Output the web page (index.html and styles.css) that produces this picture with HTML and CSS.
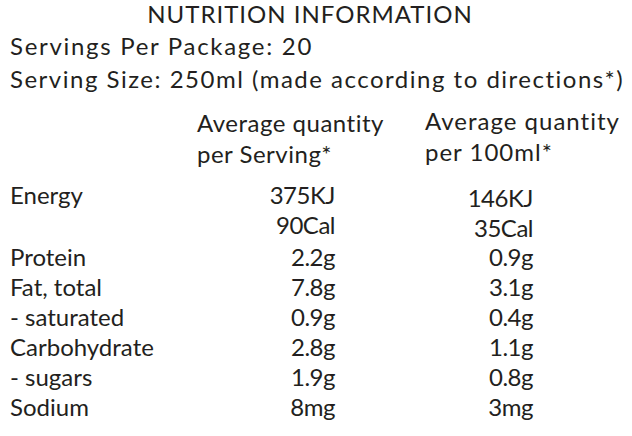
FILE: index.html
```html
<!DOCTYPE html>
<html lang="en">
<head>
<meta charset="utf-8">
<title>Nutrition Information</title>
<link rel="stylesheet" href="styles.css">
</head>
<body>
<main class="panel">
  <h1 class="title">NUTRITION INFORMATION</h1>
  <p class="info info-first">Servings Per Package: 20</p>
  <p class="info info-size">Serving Size: 250ml (made according to directions*)</p>

  <div class="heads">
    <div class="head head-1">Average quantity<br>per Serving*</div>
    <div class="head head-2">Average quantity<br>per 100ml*</div>
  </div>

  <div class="rows">
    <div class="row row-energy">
      <span class="label">Energy</span>
      <span class="val val-1">375KJ<br>90Cal</span>
      <span class="val val-2 shift">146KJ<br>35Cal</span>
    </div>
    <div class="row">
      <span class="label">Protein</span>
      <span class="val val-1">2.2g</span>
      <span class="val val-2">0.9g</span>
    </div>
    <div class="row">
      <span class="label">Fat, total</span>
      <span class="val val-1">7.8g</span>
      <span class="val val-2">3.1g</span>
    </div>
    <div class="row">
      <span class="label">- saturated</span>
      <span class="val val-1">0.9g</span>
      <span class="val val-2">0.4g</span>
    </div>
    <div class="row">
      <span class="label">Carbohydrate</span>
      <span class="val val-1">2.8g</span>
      <span class="val val-2">1.1g</span>
    </div>
    <div class="row">
      <span class="label">- sugars</span>
      <span class="val val-1">1.9g</span>
      <span class="val val-2">0.8g</span>
    </div>
    <div class="row">
      <span class="label">Sodium</span>
      <span class="val val-1">8mg</span>
      <span class="val val-2">3mg</span>
    </div>
  </div>
</main>
</body>
</html>
```

FILE: styles.css
```css
html, body {
  margin: 0;
  padding: 0;
  background: #ffffff;
}

body {
  font-family: "Lato", "Open Sans", sans-serif;
  color: #231f20;
  width: 632px;
  height: 436px;
  overflow: hidden;
}

.panel {
  display: flex;
  flex-direction: column;
  padding-left: 10px;
}

.title {
  margin: 0;
  font-size: 24px;
  font-weight: 400;
  line-height: 28px;
  text-align: center;
  letter-spacing: 1px;
  padding-right: 22px;
}

.info {
  margin: 0;
  font-size: 24px;
  line-height: 33px;
  letter-spacing: 1.7px;
  white-space: nowrap;
}

.info-size {
  letter-spacing: 1.5px;
}

.info-first {
  margin-top: 1px;
}

.heads {
  display: grid;
  grid-template-columns: 187px 228px 1fr;
  margin-top: 12px;
  font-size: 24px;
  line-height: 31px;
  white-space: nowrap;
}

.head-1 {
  grid-column: 2;
  letter-spacing: 0.5px;
}

.head-2 {
  grid-column: 3;
  margin-top: -2px;
  letter-spacing: 1px;
}

.rows {
  display: flex;
  flex-direction: column;
  margin-top: 11px;
  font-size: 24px;
  line-height: 30px;
}

.row {
  display: grid;
  grid-template-columns: 187px 138px 198px;
}

.row-energy {
  margin-bottom: 2px;
}

.val {
  text-align: right;
  letter-spacing: -0.5px;
}

.shift {
  position: relative;
  top: 3px;
}
```
